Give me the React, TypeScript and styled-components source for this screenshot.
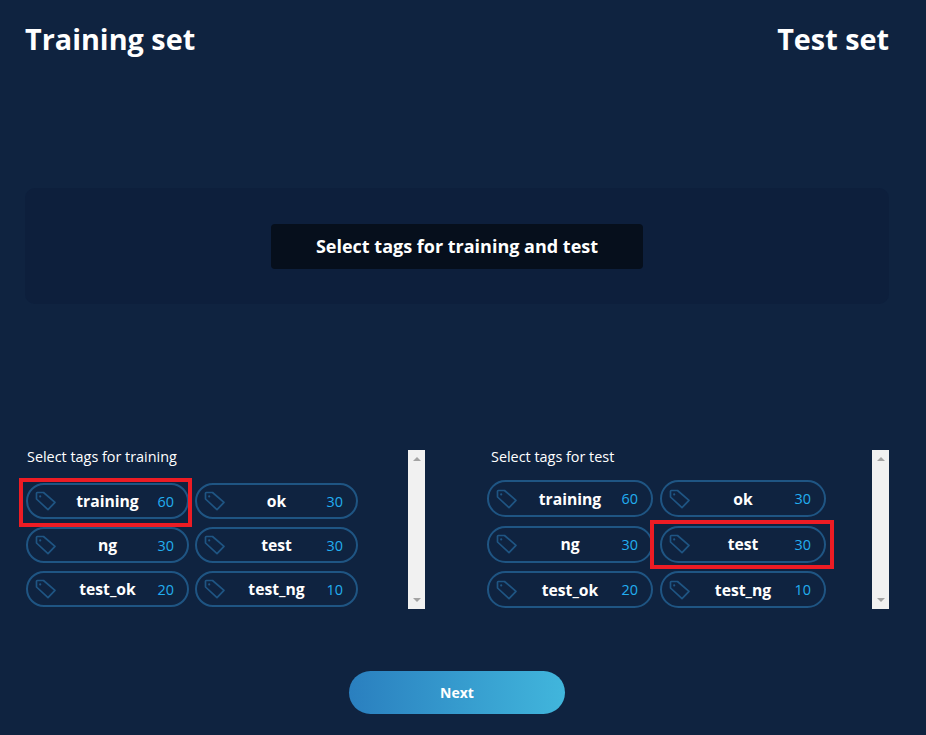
import React from "react"
import styled, { createGlobalStyle } from "styled-components"

const GlobalStyle = createGlobalStyle`
  html, body {
    margin: 0;
    padding: 0;
    background: #0f2340;
    font-family: "Open Sans", "Liberation Sans", sans-serif;
    color: #fff;
  }
`

const Page = styled.div`
  box-sizing: border-box;
  width: 926px;
  height: 735px;
  padding: 0 37px 0 25px;
  overflow: hidden;
`

const Header = styled.header`
  box-sizing: border-box;
  height: 80px;
  padding-bottom: 2px;
  display: flex;
  justify-content: space-between;
  align-items: center;
`

const Title = styled.h1`
  margin: 0;
  font-size: 28.8px;
  line-height: 40px;
  font-weight: 700;
`

const Panel = styled.section`
  box-sizing: border-box;
  height: 116px;
  margin-top: 108px;
  padding-top: 1px;
  border-radius: 10px;
  background: #0d1f3c;
  display: flex;
  align-items: center;
  justify-content: center;
`

const Banner = styled.div`
  box-sizing: border-box;
  width: 372px;
  height: 45px;
  padding-bottom: 2px;
  border-radius: 4px;
  background: #060f1c;
  font-size: 18px;
  font-weight: 700;
  display: flex;
  align-items: center;
  justify-content: center;
`

const Columns = styled.div`
  display: flex;
  justify-content: space-between;
  margin-top: 146px;
`

const TagColumn = styled.div<{ $width: number }>`
  width: ${p => p.$width}px;
  height: 159px;
  display: flex;
  justify-content: space-between;
`

const TagArea = styled.div<{ $offset: number }>`
  padding-left: ${p => p.$offset}px;
`

const Label = styled.div<{ $indent: number }>`
  padding-left: ${p => p.$indent}px;
  height: 25px;
  font-size: 14.4px;
  line-height: 14px;
`

const TagGrid = styled.div<{ $top: number; $gap: number; $chip: number; $rowGap: number }>`
  display: grid;
  grid-template-columns: ${p => p.$chip}px ${p => p.$chip}px;
  column-gap: ${p => p.$gap}px;
  row-gap: ${p => p.$rowGap}px;
  margin-top: ${p => p.$top}px;
`

const Chip = styled.div<{ $height: number; $frame?: string }>`
  position: relative;
  box-sizing: border-box;
  height: ${p => p.$height}px;
  padding: 0 14px;
  border: 2px solid #1f5583;
  border-radius: 19px;
  display: grid;
  grid-template-columns: 1fr auto 1fr;
  align-items: center;

  ${p =>
    p.$frame &&
    `
    &::after {
      content: "";
      position: absolute;
      inset: ${p.$frame};
      border: 4px solid #ed1c24;
    }
  `}
`

const TagIcon = styled.svg`
  width: 21px;
  height: 20px;
  margin-left: -7px;
  color: #1f5583;
`

const TagName = styled.span`
  font-size: 15.7px;
  font-weight: 700;
`

const TagCount = styled.span`
  justify-self: end;
  margin-right: -1px;
  font-size: 14.4px;
  color: #22aef0;
`

const Scrollbar = styled.div`
  width: 17px;
  height: 159px;
  background: #f1f1f1;
  display: flex;
  flex-direction: column;
  justify-content: space-between;
  align-items: center;
  padding: 7px 0;
  box-sizing: border-box;
`

const Arrow = styled.span<{ $down?: boolean }>`
  width: 0;
  height: 0;
  border-left: 4px solid transparent;
  border-right: 4px solid transparent;
  ${p => (p.$down ? "border-top" : "border-bottom")}: 4px solid #a3a3a3;
`

const Footer = styled.div`
  display: flex;
  justify-content: center;
  margin-top: 62px;
`

const NextButton = styled.button`
  width: 216px;
  height: 43px;
  border: none;
  border-radius: 22px;
  background: linear-gradient(90deg, #2a7fbf, #41b6dc);
  color: #fff;
  font-family: inherit;
  font-size: 14px;
  font-weight: 700;
`

const Tag = () => (
  <TagIcon viewBox="0 0 21 20" fill="none" stroke="currentColor" strokeWidth="1.7" strokeLinejoin="round">
    <path d="M1.5 2.2Q1.5 1.5 2.2 1.5H8.5L20 11.3L13 18.7L1.5 8Z" />
    <circle cx="5.2" cy="5.4" r="1.1" fill="currentColor" stroke="none" />
  </TagIcon>
)

const tags = [
  ["training", 60],
  ["ok", 30],
  ["ng", 30],
  ["test", 30],
  ["test_ok", 20],
  ["test_ng", 10],
] as const

interface ITagPickerProps {
  label: string
  marked: string
  frame: string
  width: number
  offset: number
  indent: number
  top: number
  chip: number
  chipHeight: number
  gap: number
  rowGap: number
}

const TagPicker: React.FC<ITagPickerProps> = ({
  label,
  marked,
  frame,
  width,
  offset,
  indent,
  top,
  chip,
  chipHeight,
  gap,
  rowGap,
}) => (
  <TagColumn $width={width}>
    <TagArea $offset={offset}>
      <Label $indent={indent}>{label}</Label>
      <TagGrid $top={top} $chip={chip} $gap={gap} $rowGap={rowGap}>
        {tags.map(([name, count]) => (
          <Chip key={name} $height={chipHeight} $frame={name === marked ? frame : undefined}>
            <Tag />
            <TagName>{name}</TagName>
            <TagCount>{count}</TagCount>
          </Chip>
        ))}
      </TagGrid>
    </TagArea>
    <Scrollbar>
      <Arrow />
      <Arrow $down />
    </Scrollbar>
  </TagColumn>
)

export default function App() {
  return (
    <Page>
      <GlobalStyle />
      <Header>
        <Title>Training set</Title>
        <Title>Test set</Title>
      </Header>
      <Panel>
        <Banner>Select tags for training and test</Banner>
      </Panel>
      <Columns>
        <TagPicker
          label="Select tags for training"
          marked="training"
          frame="-7px -5px -10px -9px"
          width={400}
          offset={1}
          indent={1}
          top={8}
          chip={163}
          chipHeight={36}
          gap={6}
          rowGap={8}
        />
        <TagPicker
          label="Select tags for test"
          marked="test"
          frame="-8px -10px -8px -12px"
          width={402}
          offset={0}
          indent={4}
          top={5}
          chip={166}
          chipHeight={37}
          gap={7}
          rowGap={8.5}
        />
      </Columns>
      <Footer>
        <NextButton>Next</NextButton>
      </Footer>
    </Page>
  )
}
